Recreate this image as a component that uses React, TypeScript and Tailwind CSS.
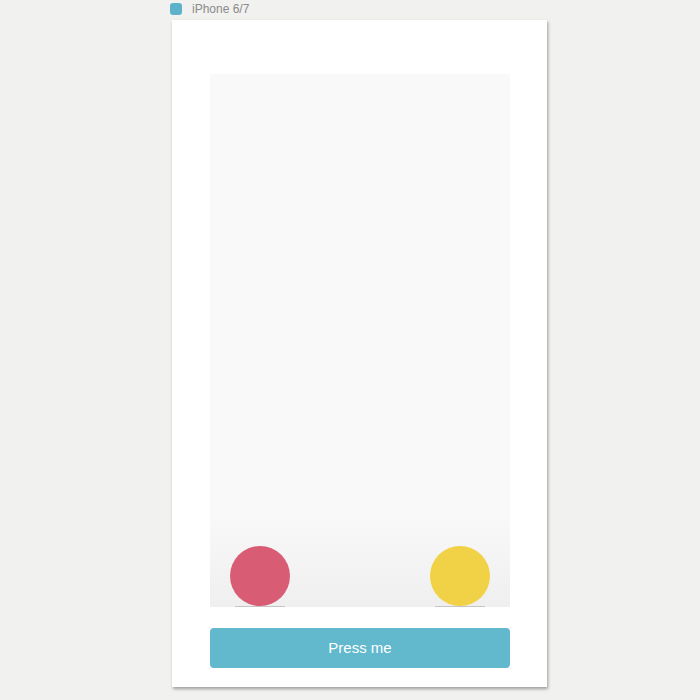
export default function App() {
  return (
    <div className="h-[700px] w-[700px] overflow-hidden bg-[#f1f1ef]" style={{ fontFamily: "'Liberation Sans', Arial, sans-serif" }}>
      <div className="ml-[170px] flex h-[20px] items-center gap-[10px] pb-[2px]">
        <div className="h-[12px] w-[12px] rounded-[3px] bg-[#5cb2cb]" />
        <span className="text-[12px] text-[#8a8a8a]">iPhone 6/7</span>
      </div>
      <div className="ml-[172px] flex h-[667px] w-[375px] flex-col bg-white pt-[54px] shadow-[1px_2px_3px_rgba(0,0,0,0.35)]">
        <div className="ml-[38px] mr-[37px] flex h-[533px] items-end justify-between bg-gradient-to-b from-[#f9f9f9] from-[82%] to-[#efefef] px-[20px] pb-[1px]">
          <div className="relative">
            <div className="h-[60px] w-[60px] rounded-full bg-[#d95c75]" />
            <div className="absolute bottom-[-1px] left-[5px] h-px w-[50px] bg-[#c4c4c4]" />
          </div>
          <div className="relative">
            <div className="h-[60px] w-[60px] rounded-full bg-[#f1d145]" />
            <div className="absolute bottom-[-1px] left-[5px] h-px w-[50px] bg-[#c4c4c4]" />
          </div>
        </div>
        <button className="ml-[38px] mr-[37px] mt-[21px] flex h-[40px] items-center justify-center rounded-[4px] bg-[#62b8cc] text-[15px] text-white">
          Press me
        </button>
      </div>
    </div>
  );
}
